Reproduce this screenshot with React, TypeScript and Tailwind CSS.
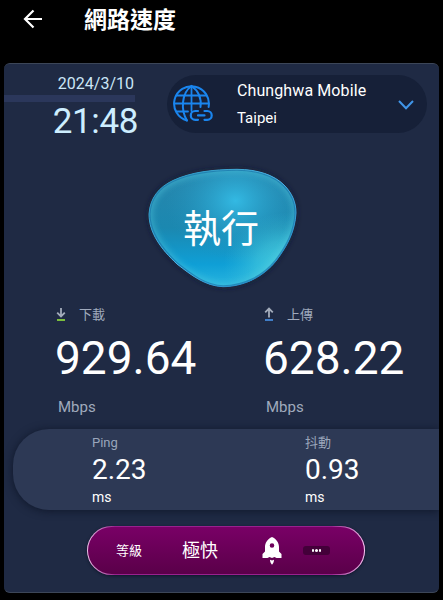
import React from 'react';

type SpeedProps = {
  label: string;
  value: string;
  direction: 'down' | 'up';
};

type LatencyProps = {
  label: string;
  value: string;
};

const BLOB =
  'M4 51C5 35 14 24 28 17.5C46 9 68 6.5 92 6.3C113 6.5 129 12 139 22C147 30 151 39 151 50C150 68 143 82 131 98C119 113 100 123.5 78 123.7C60 123 46 112 32 101C16 86 4 70 4 51Z';

const GlobeLinkIcon = () => (
  <svg width="42" height="42" viewBox="0 0 42 42" fill="none" stroke="#1a85ee" strokeWidth="2" strokeLinecap="round">
    <path d="M15 37.500A17.400 17.400 0 1 1 36.600 24" />
    <path d="M15 37.500C8.500 27 9.500 10 19.500 3C29.500 10 29 20 28.500 24" />
    <path d="M19.500 3V28M4.500 12.500H34.500M2.500 20.500H36.500M4.500 28.500H16" strokeWidth="1.800" />
    <path d="M26 28H23.200a4.400 4.400 0 0 0 0 8.800h2.800M32.500 28H35.300a4.400 4.400 0 0 1 0 8.800h-2.800M26 32.400h6.500" strokeWidth="2.200" />
  </svg>
);

const ArrowIcon = ({ direction }: { direction: 'down' | 'up' }) => (
  <svg width="10" height="14" viewBox="0 0 10 14" fill="none" strokeWidth="1.800">
    {direction === 'down' ? (
      <path d="M5 1V9.500M1.200 5.700L5 9.500L8.800 5.700" stroke="#a3acbb" />
    ) : (
      <path d="M5 10.500V1.800M1.200 5.400L5 1.600L8.800 5.400" stroke="#a3acbb" />
    )}
    <path d="M1 13H9" stroke={direction === 'down' ? '#86cf3e' : '#4487d6'} />
  </svg>
);

const RunButton = () => (
  <button className="relative block h-[130px] w-[156px]">
    <svg className="absolute inset-0 overflow-visible" width="156" height="130" viewBox="0 0 156 130">
      <defs>
        <linearGradient id="base" x1="0" y1="0" x2="0" y2="1">
          <stop offset="0" stopColor="#2a86ac" />
          <stop offset="0.5" stopColor="#1b88b0" />
          <stop offset="0.78" stopColor="#0f9fd6" />
          <stop offset="1" stopColor="#30bce2" />
        </linearGradient>
        <radialGradient id="glow" cx="0.58" cy="0.29" r="0.45">
          <stop offset="0" stopColor="#34bce6" stopOpacity="0.95" />
          <stop offset="1" stopColor="#2492bd" stopOpacity="0" />
        </radialGradient>
        <radialGradient id="corner" cx="0.92" cy="0.8" r="0.42">
          <stop offset="0" stopColor="#5fe3e6" stopOpacity="0.8" />
          <stop offset="0.5" stopColor="#4fd3e0" stopOpacity="0.5" />
          <stop offset="1" stopColor="#35bddb" stopOpacity="0" />
        </radialGradient>
        <linearGradient id="rim" x1="0" y1="0" x2="1" y2="1">
          <stop offset="0" stopColor="#2793ba" />
          <stop offset="0.5" stopColor="#4fb4e6" />
          <stop offset="1" stopColor="#1478b8" />
        </linearGradient>
        <filter id="soft" x="-20%" y="-20%" width="140%" height="140%">
          <feGaussianBlur stdDeviation="3" />
        </filter>
        <clipPath id="blobClip">
          <path d={BLOB} />
        </clipPath>
      </defs>
      <path d={BLOB} fill="#121c33" filter="url(#soft)" />
      <g clipPath="url(#blobClip)">
        <rect width="156" height="130" fill="url(#base)" />
        <rect width="156" height="130" fill="url(#glow)" />
        <rect width="156" height="130" fill="url(#corner)" />
        <path d={BLOB} fill="none" stroke="#51c9df" strokeOpacity="0.55" strokeWidth="6" filter="url(#soft)" />
        <path d={BLOB} fill="none" stroke="#146da5" strokeOpacity="0.6" strokeWidth="3" />
      </g>
      <path d={BLOB} fill="none" stroke="url(#rim)" strokeWidth="1" />
    </svg>
    <span className="relative block pt-px pr-1 text-[38px] leading-[128px] text-white">執行</span>
  </button>
);

const Speed: React.FC<SpeedProps> = ({ label, value, direction }) => (
  <div className="w-[208px] shrink-0">
    <div className="flex h-5 items-center gap-[13px] text-[13px] text-[#a0aabd]">
      <ArrowIcon direction={direction} />
      <span className="pt-px">{label}</span>
    </div>
    <div className="mt-2 -ml-px h-[52px] text-[46px] leading-[52px] text-white">{value}</div>
    <div className="mt-[13px] ml-0.5 h-5 text-[15px] leading-5 text-[#a0aabd]">Mbps</div>
  </div>
);

const Latency: React.FC<LatencyProps> = ({ label, value }) => (
  <div className="w-[213px] shrink-0">
    <div className="h-[21px] text-[13px] leading-[21px] text-[#9aa6bb]">{label}</div>
    <div className="h-[33px] text-[28px] leading-[33px] text-white">{value}</div>
    <div className="h-[22px] text-sm leading-[22px] text-white">ms</div>
  </div>
);

const App: React.FC = () => {
  return (
    <div className="h-[600px] w-[443px] overflow-hidden bg-black px-1 font-['Roboto','Noto_Sans_CJK_TC',sans-serif]">
      <header className="flex h-[63px] items-start pl-[19px]">
        <svg className="mt-[9px]" width="20" height="20" viewBox="0 0 20 20" fill="none" stroke="#fff" strokeWidth="2.200">
          <path d="M19 10H2M10.500 1.500L2 10L10.500 18.500" />
        </svg>
        <h1 className="mt-[5px] ml-[41px] text-[23px] leading-8 font-bold text-white">網路速度</h1>
      </header>

      <main className="h-[530px] w-[435px] overflow-hidden rounded-md border-y border-[#3c4658] bg-[#1f2a44]">
        <div className="flex h-[87px] justify-between pr-3">
          <div className="w-[133px] pt-[9px] text-right">
            <div className="h-[22px] pr-[3px] text-base leading-[22px] text-[#cbe6f7]">2024/3/10</div>
            <div className="mr-0.5 h-[7px] bg-[#2b375b]" />
            <div className="-mr-0.5 h-[50px] pr-px text-[35px] leading-10 tracking-[-0.4px] text-[#cdeeff]">21:48</div>
          </div>
          <div className="mt-[11px] flex h-[58px] w-[260px] items-center rounded-full bg-[#162038]">
            <div className="ml-[5px]">
              <GlobeLinkIcon />
            </div>
            <div className="ml-[23px] flex-1 text-white">
              <div className="text-base leading-7 tracking-[0.1px]">Chunghwa Mobile</div>
              <div className="text-[15px] leading-[26px]">Taipei</div>
            </div>
            <svg className="mt-0.5 mr-[13px]" width="16" height="10" viewBox="0 0 16 10" fill="none" stroke="#4095e8" strokeWidth="2">
              <path d="M1 1L8 8.300L15 1" />
            </svg>
          </div>
        </div>

        <div className="mt-3 ml-[141px]">
          <RunButton />
        </div>

        <div className="mt-[11px] flex pl-[52px]">
          <Speed label="下載" value="929.64" direction="down" />
          <Speed label="上傳" value="628.22" direction="up" />
        </div>

        <div className="mt-3 ml-[9px] flex h-[81px] rounded-l-[36px] bg-[#2d3955] pt-[3px] pl-[79px] shadow-[0_1px_8px_rgba(8,16,32,0.7)]">
          <Latency label="Ping" value="2.23" />
          <Latency label="抖動" value="0.93" />
        </div>

        <div className="mt-4 ml-[83px] h-[49px] w-[278px] rounded-full bg-linear-to-r from-[#f0c4ec] via-[#99218e] via-10% to-[#99218e] to-90% shadow-[0_1px_3px_rgba(8,16,32,0.7)]">
          <div className="h-full rounded-full bg-linear-to-r from-transparent from-88% to-[#f5cff2] p-px">
            <div className="flex h-full items-center rounded-full bg-linear-to-b from-[#790066] to-[#5a0049] pl-7 text-white">
              <span className="text-[13px]">等級</span>
              <span className="ml-10 text-[18px]">極快</span>
              <svg className="ml-[44px]" width="20" height="28" viewBox="0 0 20 28" fill="#fff">
                <path
                  fillRule="evenodd"
                  d="M10 0C14.500 2 17 6 17 10V14.500L19.500 17V21H14.500L12.500 20L10 21L7.500 20L5.500 21H.5V17L3 14.500V10C3 6 5.500 2 10 0ZM10 6.200A2.300 2.300 0 1 0 10 10.800A2.300 2.300 0 1 0 10 6.200Z"
                />
                <path d="M8 22.700L10 23.500L12 22.700C12 25 11 26.500 10 27.800C9 26.500 8 25 8 22.700Z" />
              </svg>
              <span className="ml-[21px] flex h-[9px] w-[27px] items-center justify-center gap-px rounded-[3px] bg-[#430039]">
                <i className="size-[2.5px] rounded-full bg-white" />
                <i className="size-[2.5px] rounded-full bg-white" />
                <i className="size-[2.5px] rounded-full bg-white" />
              </span>
            </div>
          </div>
        </div>
      </main>
    </div>
  );
};

export default App;
